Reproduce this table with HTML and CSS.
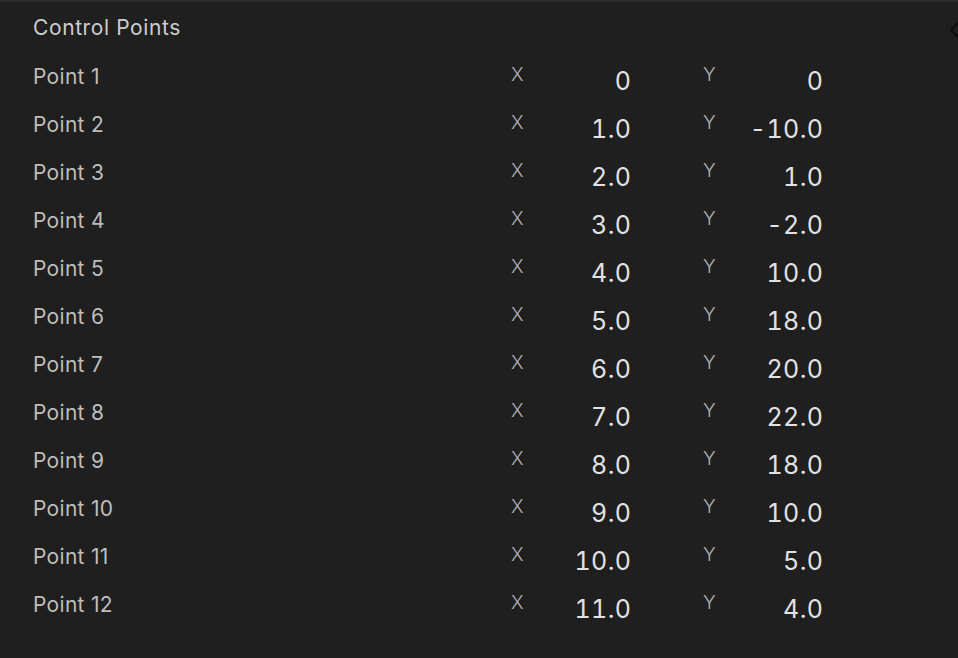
FILE: index.html
```html
<!DOCTYPE html>
<html>
<head>
<meta charset="utf-8">
<link rel="stylesheet" href="styles.css">
</head>
<body>
<div class="panel">
  <div class="title">Control Points</div>
  <div class="rows">
    <div class="row"><span class="name">Point 1</span><span class="axis">X</span><span class="val">0</span><span class="axis axis-y">Y</span><span class="val">0</span></div>
    <div class="row"><span class="name">Point 2</span><span class="axis">X</span><span class="val">1.0</span><span class="axis axis-y">Y</span><span class="val">-10.0</span></div>
    <div class="row"><span class="name">Point 3</span><span class="axis">X</span><span class="val">2.0</span><span class="axis axis-y">Y</span><span class="val">1.0</span></div>
    <div class="row"><span class="name">Point 4</span><span class="axis">X</span><span class="val">3.0</span><span class="axis axis-y">Y</span><span class="val">-2.0</span></div>
    <div class="row"><span class="name">Point 5</span><span class="axis">X</span><span class="val">4.0</span><span class="axis axis-y">Y</span><span class="val">10.0</span></div>
    <div class="row"><span class="name">Point 6</span><span class="axis">X</span><span class="val">5.0</span><span class="axis axis-y">Y</span><span class="val">18.0</span></div>
    <div class="row"><span class="name">Point 7</span><span class="axis">X</span><span class="val">6.0</span><span class="axis axis-y">Y</span><span class="val">20.0</span></div>
    <div class="row"><span class="name">Point 8</span><span class="axis">X</span><span class="val">7.0</span><span class="axis axis-y">Y</span><span class="val">22.0</span></div>
    <div class="row"><span class="name">Point 9</span><span class="axis">X</span><span class="val">8.0</span><span class="axis axis-y">Y</span><span class="val">18.0</span></div>
    <div class="row"><span class="name">Point 10</span><span class="axis">X</span><span class="val">9.0</span><span class="axis axis-y">Y</span><span class="val">10.0</span></div>
    <div class="row"><span class="name">Point 11</span><span class="axis">X</span><span class="val">10.0</span><span class="axis axis-y">Y</span><span class="val">5.0</span></div>
    <div class="row"><span class="name">Point 12</span><span class="axis">X</span><span class="val">11.0</span><span class="axis axis-y">Y</span><span class="val">4.0</span></div>
  </div>
  <svg class="chev" width="12" height="22" viewBox="0 0 12 22"><path d="M11 1 L2 10 L11 19" fill="none" stroke="#0e0e0e" stroke-width="2"/></svg>
</div>
</body>
</html>
```
FILE: styles.css
```css
html, body {
  margin: 0;
  padding: 0;
  background: #1f1f1f;
}
body {
  width: 958px;
  height: 658px;
  overflow: hidden;
  font-family: Inter, "Noto Sans", sans-serif;
}
.panel {
  position: relative;
  height: 656px;
  border-top: 2px solid #2a2a2a;
  padding-left: 33px;
  box-sizing: border-box;
}
.title {
  color: #cdcdcd;
  font-size: 21px;
  font-weight: 400;
  letter-spacing: 0.6px;
  line-height: 24px;
  padding-top: 14px;
  height: 24px;
}
.rows {
  padding-top: 22px;
}
.row {
  display: grid;
  grid-template-columns: 478px 40px 80px 112px 80px;
  height: 48px;
  align-items: start;
}
.name {
  color: #bdbdbd;
  font-size: 21px;
  letter-spacing: 0.3px;
  line-height: 24px;
  padding-top: 3px;
}
.axis {
  color: #b4b4b4;
  font-size: 19px;
  font-weight: 300;
  line-height: 24px;
  padding-top: 1px;
}
.axis-y {
  padding-left: 72px;
}
.val {
  color: #e2e2e2;
  font-size: 25px;
  font-variant-numeric: tabular-nums;
  letter-spacing: 0.4px;
  margin-right: -0.4px;
  line-height: 28px;
  text-align: right;
  padding-top: 5px;
}
.chev {
  position: absolute;
  right: -3px;
  top: 18px;
}
```
